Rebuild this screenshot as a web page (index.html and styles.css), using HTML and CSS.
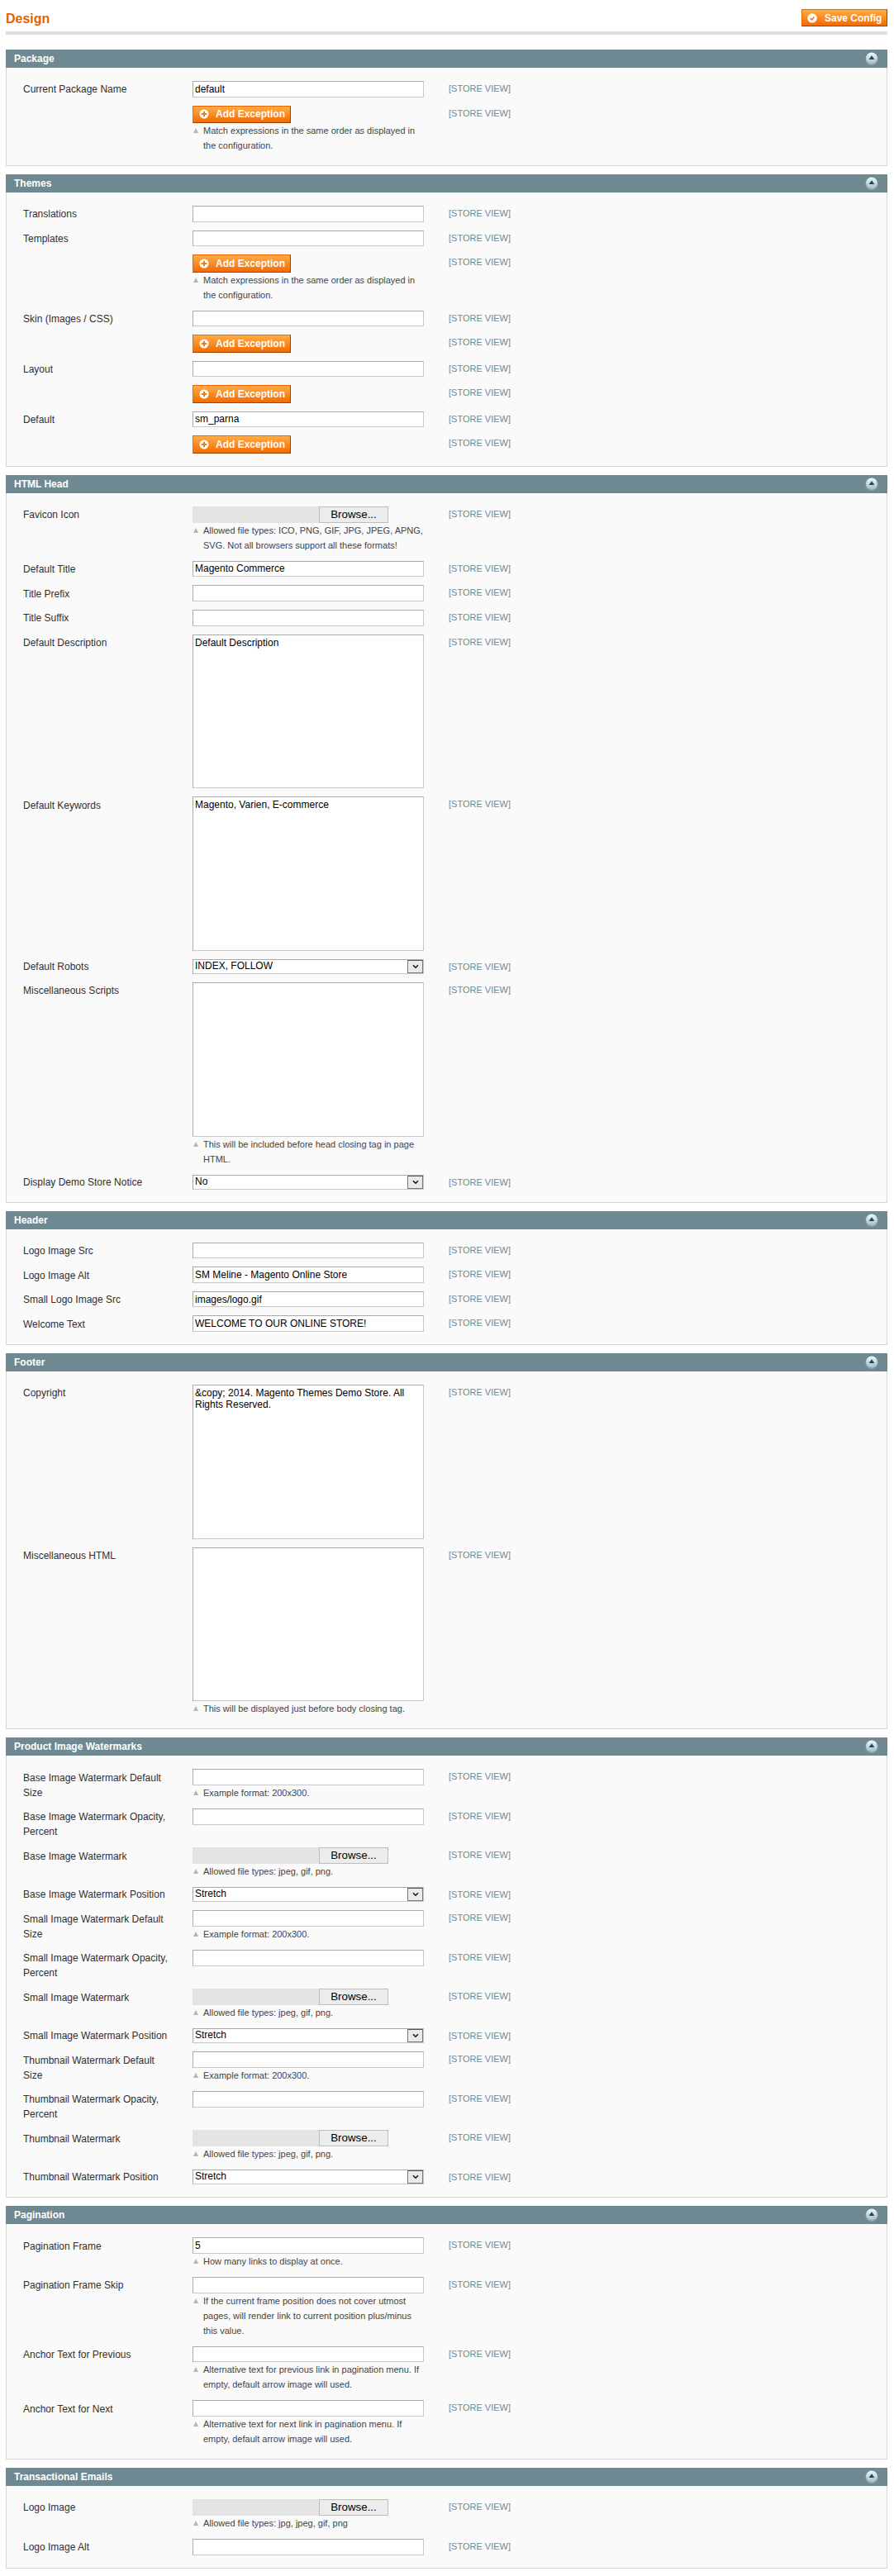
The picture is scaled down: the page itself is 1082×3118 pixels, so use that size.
FILE: index.html
```html
<!DOCTYPE html>
<html lang="en">
<head>
  <meta charset="UTF-8" />
  <title>Design</title>
  <link rel="stylesheet" href="styles.css">
</head>
<body>
  <svg class="icon-defs" width="0" height="0">
    <defs>
      <linearGradient id="collapseFill" x1="0" y1="0" x2="0" y2="1">
        <stop offset="0" stop-color="#f2f6f7" />
        <stop offset="1" stop-color="#a5c0c8" />
      </linearGradient>
      <symbol id="iconAdd" viewBox="0 0 12 12">
        <circle cx="6" cy="6" r="5.6" fill="#fff" />
        <path d="M6 2.8v6.4M2.8 6h6.4" stroke="#f27a10" stroke-width="2" />
      </symbol>
      <symbol id="iconSave" viewBox="0 0 12 12">
        <circle cx="6" cy="6" r="5.8" fill="#fff" />
        <path d="M3.6 6.2l1.8 1.8 3-3.6" fill="none" stroke="#ee6a0a" stroke-width="1.5" />
      </symbol>
      <symbol id="iconCollapse" viewBox="0 0 16 16">
        <circle cx="8" cy="8.4" r="7.6" fill="#8fa6ad" />
        <circle cx="8" cy="7.4" r="6.8" fill="url(#collapseFill)" />
        <path d="M8 4.2l3.4 4.8H4.6z" fill="#1b4b5c" />
      </symbol>
      <symbol id="iconChevron" viewBox="0 0 8 6">
        <path d="M1 1.2l3 3 3-3" fill="none" stroke="#111" stroke-width="1.5" />
      </symbol>
    </defs>
  </svg>

  <div class="page-head">
    <h3>Design</h3>
    <button class="btn btn-save"><svg class="btn-icon"><use href="#iconSave" /></svg>Save Config</button>
  </div>

  <div class="section">
    <div class="section-head">Package<svg class="collapse"><use href="#iconCollapse" /></svg></div>
    <div class="section-body">
      <div class="row">
        <label>Current Package Name</label>
        <div class="value"><input type="text" value="default" /></div>
        <span class="scope">[STORE VIEW]</span>
      </div>
      <div class="row">
        <label></label>
        <div class="value">
          <button class="btn btn-add"><svg class="btn-icon"><use href="#iconAdd" /></svg>Add Exception</button>
          <p class="note">Match expressions in the same order as displayed in the configuration.</p>
        </div>
        <span class="scope">[STORE VIEW]</span>
      </div>
    </div>
  </div>

  <div class="section">
    <div class="section-head">Themes<svg class="collapse"><use href="#iconCollapse" /></svg></div>
    <div class="section-body">
      <div class="row">
        <label>Translations</label>
        <div class="value"><input type="text" /></div>
        <span class="scope">[STORE VIEW]</span>
      </div>
      <div class="row">
        <label>Templates</label>
        <div class="value"><input type="text" /></div>
        <span class="scope">[STORE VIEW]</span>
      </div>
      <div class="row">
        <label></label>
        <div class="value">
          <button class="btn btn-add"><svg class="btn-icon"><use href="#iconAdd" /></svg>Add Exception</button>
          <p class="note">Match expressions in the same order as displayed in the configuration.</p>
        </div>
        <span class="scope">[STORE VIEW]</span>
      </div>
      <div class="row">
        <label>Skin (Images / CSS)</label>
        <div class="value"><input type="text" /></div>
        <span class="scope">[STORE VIEW]</span>
      </div>
      <div class="row">
        <label></label>
        <div class="value"><button class="btn btn-add"><svg class="btn-icon"><use href="#iconAdd" /></svg>Add Exception</button></div>
        <span class="scope">[STORE VIEW]</span>
      </div>
      <div class="row">
        <label>Layout</label>
        <div class="value"><input type="text" /></div>
        <span class="scope">[STORE VIEW]</span>
      </div>
      <div class="row">
        <label></label>
        <div class="value"><button class="btn btn-add"><svg class="btn-icon"><use href="#iconAdd" /></svg>Add Exception</button></div>
        <span class="scope">[STORE VIEW]</span>
      </div>
      <div class="row">
        <label>Default</label>
        <div class="value"><input type="text" value="sm_parna" /></div>
        <span class="scope">[STORE VIEW]</span>
      </div>
      <div class="row">
        <label></label>
        <div class="value"><button class="btn btn-add"><svg class="btn-icon"><use href="#iconAdd" /></svg>Add Exception</button></div>
        <span class="scope">[STORE VIEW]</span>
      </div>
    </div>
  </div>

  <div class="section">
    <div class="section-head">HTML Head<svg class="collapse"><use href="#iconCollapse" /></svg></div>
    <div class="section-body">
      <div class="row">
        <label>Favicon Icon</label>
        <div class="value">
          <div class="file"><span class="file-name"></span><span class="file-btn">Browse...</span></div>
          <p class="note">Allowed file types: ICO, PNG, GIF, JPG, JPEG, APNG, SVG. Not all browsers support all these formats!</p>
        </div>
        <span class="scope">[STORE VIEW]</span>
      </div>
      <div class="row">
        <label>Default Title</label>
        <div class="value"><input type="text" value="Magento Commerce" /></div>
        <span class="scope">[STORE VIEW]</span>
      </div>
      <div class="row">
        <label>Title Prefix</label>
        <div class="value"><input type="text" /></div>
        <span class="scope">[STORE VIEW]</span>
      </div>
      <div class="row">
        <label>Title Suffix</label>
        <div class="value"><input type="text" /></div>
        <span class="scope">[STORE VIEW]</span>
      </div>
      <div class="row">
        <label>Default Description</label>
        <div class="value"><textarea>Default Description</textarea></div>
        <span class="scope">[STORE VIEW]</span>
      </div>
      <div class="row">
        <label>Default Keywords</label>
        <div class="value"><textarea>Magento, Varien, E-commerce</textarea></div>
        <span class="scope">[STORE VIEW]</span>
      </div>
      <div class="row row-select">
        <label>Default Robots</label>
        <div class="value">
          <div class="select"><span>INDEX, FOLLOW</span><span class="select-arrow"><svg><use href="#iconChevron" /></svg></span></div>
        </div>
        <span class="scope">[STORE VIEW]</span>
      </div>
      <div class="row">
        <label>Miscellaneous Scripts</label>
        <div class="value">
          <textarea></textarea>
          <p class="note">This will be included before head closing tag in page HTML.</p>
        </div>
        <span class="scope">[STORE VIEW]</span>
      </div>
      <div class="row row-select">
        <label>Display Demo Store Notice</label>
        <div class="value">
          <div class="select"><span>No</span><span class="select-arrow"><svg><use href="#iconChevron" /></svg></span></div>
        </div>
        <span class="scope">[STORE VIEW]</span>
      </div>
    </div>
  </div>

  <div class="section">
    <div class="section-head">Header<svg class="collapse"><use href="#iconCollapse" /></svg></div>
    <div class="section-body">
      <div class="row">
        <label>Logo Image Src</label>
        <div class="value"><input type="text" /></div>
        <span class="scope">[STORE VIEW]</span>
      </div>
      <div class="row">
        <label>Logo Image Alt</label>
        <div class="value"><input type="text" value="SM Meline - Magento Online Store" /></div>
        <span class="scope">[STORE VIEW]</span>
      </div>
      <div class="row">
        <label>Small Logo Image Src</label>
        <div class="value"><input type="text" value="images/logo.gif" /></div>
        <span class="scope">[STORE VIEW]</span>
      </div>
      <div class="row">
        <label>Welcome Text</label>
        <div class="value"><input type="text" value="WELCOME TO OUR ONLINE STORE!" /></div>
        <span class="scope">[STORE VIEW]</span>
      </div>
    </div>
  </div>

  <div class="section">
    <div class="section-head">Footer<svg class="collapse"><use href="#iconCollapse" /></svg></div>
    <div class="section-body">
      <div class="row">
        <label>Copyright</label>
        <div class="value"><textarea>&amp;copy; 2014. Magento Themes Demo Store. All Rights Reserved.</textarea></div>
        <span class="scope">[STORE VIEW]</span>
      </div>
      <div class="row">
        <label>Miscellaneous HTML</label>
        <div class="value">
          <textarea></textarea>
          <p class="note">This will be displayed just before body closing tag.</p>
        </div>
        <span class="scope">[STORE VIEW]</span>
      </div>
    </div>
  </div>

  <div class="section">
    <div class="section-head">Product Image Watermarks<svg class="collapse"><use href="#iconCollapse" /></svg></div>
    <div class="section-body">
      <div class="row">
        <label>Base Image Watermark Default Size</label>
        <div class="value">
          <input type="text" />
          <p class="note">Example format: 200x300.</p>
        </div>
        <span class="scope">[STORE VIEW]</span>
      </div>
      <div class="row">
        <label>Base Image Watermark Opacity, Percent</label>
        <div class="value"><input type="text" /></div>
        <span class="scope">[STORE VIEW]</span>
      </div>
      <div class="row">
        <label>Base Image Watermark</label>
        <div class="value">
          <div class="file"><span class="file-name"></span><span class="file-btn">Browse...</span></div>
          <p class="note">Allowed file types: jpeg, gif, png.</p>
        </div>
        <span class="scope">[STORE VIEW]</span>
      </div>
      <div class="row row-select">
        <label>Base Image Watermark Position</label>
        <div class="value">
          <div class="select"><span>Stretch</span><span class="select-arrow"><svg><use href="#iconChevron" /></svg></span></div>
        </div>
        <span class="scope">[STORE VIEW]</span>
      </div>
      <div class="row">
        <label>Small Image Watermark Default Size</label>
        <div class="value">
          <input type="text" />
          <p class="note">Example format: 200x300.</p>
        </div>
        <span class="scope">[STORE VIEW]</span>
      </div>
      <div class="row">
        <label>Small Image Watermark Opacity, Percent</label>
        <div class="value"><input type="text" /></div>
        <span class="scope">[STORE VIEW]</span>
      </div>
      <div class="row">
        <label>Small Image Watermark</label>
        <div class="value">
          <div class="file"><span class="file-name"></span><span class="file-btn">Browse...</span></div>
          <p class="note">Allowed file types: jpeg, gif, png.</p>
        </div>
        <span class="scope">[STORE VIEW]</span>
      </div>
      <div class="row row-select">
        <label>Small Image Watermark Position</label>
        <div class="value">
          <div class="select"><span>Stretch</span><span class="select-arrow"><svg><use href="#iconChevron" /></svg></span></div>
        </div>
        <span class="scope">[STORE VIEW]</span>
      </div>
      <div class="row">
        <label>Thumbnail Watermark Default Size</label>
        <div class="value">
          <input type="text" />
          <p class="note">Example format: 200x300.</p>
        </div>
        <span class="scope">[STORE VIEW]</span>
      </div>
      <div class="row">
        <label>Thumbnail Watermark Opacity, Percent</label>
        <div class="value"><input type="text" /></div>
        <span class="scope">[STORE VIEW]</span>
      </div>
      <div class="row">
        <label>Thumbnail Watermark</label>
        <div class="value">
          <div class="file"><span class="file-name"></span><span class="file-btn">Browse...</span></div>
          <p class="note">Allowed file types: jpeg, gif, png.</p>
        </div>
        <span class="scope">[STORE VIEW]</span>
      </div>
      <div class="row row-select">
        <label>Thumbnail Watermark Position</label>
        <div class="value">
          <div class="select"><span>Stretch</span><span class="select-arrow"><svg><use href="#iconChevron" /></svg></span></div>
        </div>
        <span class="scope">[STORE VIEW]</span>
      </div>
    </div>
  </div>

  <div class="section">
    <div class="section-head">Pagination<svg class="collapse"><use href="#iconCollapse" /></svg></div>
    <div class="section-body">
      <div class="row">
        <label>Pagination Frame</label>
        <div class="value">
          <input type="text" value="5" />
          <p class="note">How many links to display at once.</p>
        </div>
        <span class="scope">[STORE VIEW]</span>
      </div>
      <div class="row">
        <label>Pagination Frame Skip</label>
        <div class="value">
          <input type="text" />
          <p class="note">If the current frame position does not cover utmost pages, will render link to current position plus/minus this value.</p>
        </div>
        <span class="scope">[STORE VIEW]</span>
      </div>
      <div class="row">
        <label>Anchor Text for Previous</label>
        <div class="value">
          <input type="text" />
          <p class="note">Alternative text for previous link in pagination menu. If empty, default arrow image will used.</p>
        </div>
        <span class="scope">[STORE VIEW]</span>
      </div>
      <div class="row">
        <label>Anchor Text for Next</label>
        <div class="value">
          <input type="text" />
          <p class="note">Alternative text for next link in pagination menu. If empty, default arrow image will used.</p>
        </div>
        <span class="scope">[STORE VIEW]</span>
      </div>
    </div>
  </div>

  <div class="section">
    <div class="section-head">Transactional Emails<svg class="collapse"><use href="#iconCollapse" /></svg></div>
    <div class="section-body">
      <div class="row">
        <label>Logo Image</label>
        <div class="value">
          <div class="file"><span class="file-name"></span><span class="file-btn">Browse...</span></div>
          <p class="note">Allowed file types: jpg, jpeg, gif, png</p>
        </div>
        <span class="scope">[STORE VIEW]</span>
      </div>
      <div class="row">
        <label>Logo Image Alt</label>
        <div class="value"><input type="text" /></div>
        <span class="scope">[STORE VIEW]</span>
      </div>
    </div>
  </div>
</body>
</html>
```

FILE: styles.css
```css
html, body {
  margin: 0;
  background: #fff;
}
body {
  font-family: "Liberation Sans", Arial, sans-serif;
  font-size: 12px;
  color: #2f2f2f;
  padding: 0 8px 9px 7px;
  overflow: hidden;
}
.icon-defs {
  position: absolute;
}

/* page title and save button */
.page-head {
  display: flex;
  justify-content: space-between;
  align-items: flex-start;
  box-sizing: border-box;
  height: 42px;
  padding-top: 11px;
  border-bottom: 4px solid #dfdfdf;
  margin-bottom: 18px;
}
.page-head h3 {
  margin: 2px 0 0;
  font-size: 16px;
  line-height: 20px;
  color: #eb5e00;
}

.btn {
  display: flex;
  align-items: center;
  box-sizing: border-box;
  height: 21.33px;
  padding: 0;
  border: 1px solid;
  border-color: #ed6502 #a04300 #a04300 #ed6502;
  background: linear-gradient(#ffac47, #f36b00);
  color: #fff;
  font-family: inherit;
  font-size: 12px;
  font-weight: bold;
}
.btn-add {
  width: 119px;
  padding-left: 7px;
}
.btn-save {
  width: 104px;
  padding-left: 6px;
}
.btn-icon {
  width: 12px;
  height: 12px;
  margin-right: 8px;
  flex-shrink: 0;
}
.btn-save .btn-icon {
  margin-right: 9px;
}

/* sections */
.section {
  margin-bottom: 10px;
}
.section:last-child {
  margin-bottom: 0;
}
.section-head {
  display: flex;
  justify-content: space-between;
  align-items: center;
  height: 22px;
  padding: 0 11px 0 10px;
  background: #6f8992;
  color: #fff;
  font-weight: bold;
}
.collapse {
  width: 16px;
  height: 16px;
}
.section-body {
  padding: 16px 20px 5px;
  background: #fafafa;
  border: 1px solid #d6d6d6;
  border-top: 0;
}

.row {
  display: flex;
  padding-bottom: 10px;
}
.row label {
  width: 180px;
  margin-right: 25px;
  padding-top: 1.33px;
  line-height: 18px;
  flex-shrink: 0;
}
.row-select label {
  padding-top: 0;
}
.value {
  width: 280px;
  margin-right: 30px;
  flex-shrink: 0;
}
.scope {
  color: #6f8992;
  font-size: 11px;
  line-height: 18px;
}

input[type="text"],
textarea {
  display: block;
  width: 100%;
  box-sizing: border-box;
  margin: 0;
  padding: 2px;
  border: 1px solid;
  border-color: #aaa #c8c8c8 #c8c8c8 #aaa;
  border-radius: 0;
  background: #fff;
  color: #000;
  font-family: inherit;
  font-size: 12px;
}
input[type="text"] {
  height: 19.67px;
}
textarea {
  height: 186.67px;
  resize: none;
}

.select {
  display: flex;
  justify-content: space-between;
  box-sizing: border-box;
  height: 18px;
  padding-left: 2px;
  border: 1px solid;
  border-color: #aaa #c8c8c8 #c8c8c8 #aaa;
  background: #fff;
  color: #000;
  line-height: 14px;
}
.select-arrow {
  display: flex;
  align-items: center;
  justify-content: center;
  width: 19px;
  box-sizing: border-box;
  border: 1px solid #777;
  border-top-color: #555;
  background: #eaeaea;
}
.select-arrow svg {
  width: 8px;
  height: 6px;
}

.file {
  display: flex;
  width: 237px;
  height: 20px;
}
.file-name {
  flex: 1;
  background: #e4e4e4;
}
.file-btn {
  width: 84px;
  box-sizing: border-box;
  border: 1px solid #bdbdbd;
  background: #ececec;
  color: #000;
  font-size: 13.33px;
  line-height: 18px;
  text-align: center;
}

.note {
  position: relative;
  margin: 0;
  padding-left: 13px;
  font-size: 11px;
  line-height: 18px;
  color: #3d4549;
}
.note::before {
  content: "";
  position: absolute;
  left: 1px;
  top: 6px;
  border-left: 3.5px solid transparent;
  border-right: 3.5px solid transparent;
  border-bottom: 6px solid #a9b9bf;
}
```
